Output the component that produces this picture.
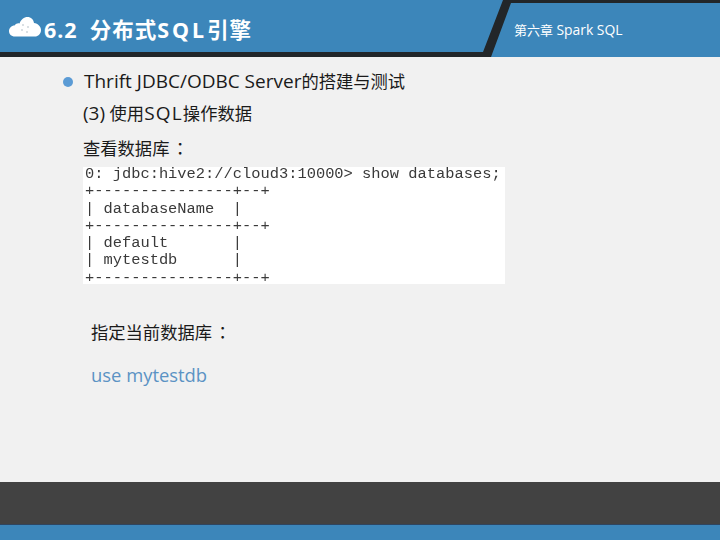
<script>
  const codeLines = [
    '0: jdbc:hive2://cloud3:10000> show databases;',
    '+---------------+--+',
    '| databaseName  |',
    '+---------------+--+',
    '| default       |',
    '| mytestdb      |',
    '+---------------+--+'
  ];
</script>

<div class="slide">
  <header class="header">
    <svg class="slash" viewBox="0 0 720 57" width="720" height="57" aria-hidden="true">
      <polygon points="0,52 483,52 503,0 720,0 720,3 511,3 491,57 0,57" fill="#222629" />
    </svg>
    <div class="title">
      <svg class="cloud" viewBox="0 0 32 20" width="32" height="20" aria-hidden="true">
        <path d="M6 19.500 C2 19.500 0 17 0 14 C0 11 2.500 8.500 5.500 8.500 C7 6.500 9 6 10.500 6.500 C12 2.500 15 0 18.500 0 C22 0 24.500 2.500 25 6 C29 6.500 32 9.500 32 13 C32 17 29 19.500 26 19.500 Z" fill="#fff" />
        <g fill="#9aa9b5">
          <circle cx="14" cy="8" r="0.7" />
          <circle cx="19" cy="10" r="0.7" />
          <circle cx="13" cy="13" r="0.7" />
          <circle cx="18" cy="15" r="0.7" />
        </g>
      </svg>
      <h1><span class="num">6.2</span>分布式<span class="sql">SQL</span>引擎</h1>
    </div>
    <div class="chapter">第六章 <span class="chapter-lat">Spark SQL</span></div>
  </header>

  <main class="content">
    <div class="bullet-row">
      <span class="dot"></span>
      <span><span class="lat">Thrift JDBC/ODBC Server</span>的搭建与测试</span>
    </div>
    <p class="step"><span class="lat">(3)</span> 使用<span class="lat spaced">SQL</span>操作数据</p>
    <p class="step show-db">查看数据库<span class="colon">：</span></p>
    <div class="shot">
      <pre class="code">{codeLines.join('\n')}</pre>
    </div>
    <p class="current">指定当前数据库<span class="colon">：</span></p>
    <p class="cmd">use mytestdb</p>
  </main>

  <div class="footer-dark"></div>
  <div class="footer-blue"></div>
</div>

<style>
  :global(body) {
    margin: 0;
  }

  .slide {
    width: 720px;
    height: 540px;
    background: #f1f1f1;
    display: flex;
    flex-direction: column;
    overflow: hidden;
    font-family: "Open Sans", "Noto Sans CJK SC", sans-serif;
    color: #1a1a1a;
  }

  .header {
    position: relative;
    height: 57px;
    flex: none;
    background: #3c86ba;
    display: flex;
    justify-content: space-between;
    align-items: flex-start;
  }

  .slash {
    position: absolute;
    left: 0;
    top: 0;
  }

  .title {
    position: relative;
    display: flex;
    align-items: center;
    gap: 3px;
    margin: 16px 0 0 9px;
  }

  .cloud {
    margin-top: -6px;
  }

  h1 {
    margin: 0;
    font-size: 21.500px;
    line-height: 28px;
    font-weight: 700;
    letter-spacing: 1px;
    color: #fff;
    font-family: "Noto Sans", "Noto Sans CJK SC", sans-serif;
    white-space: nowrap;
  }

  .num {
    margin-right: 12px;
  }

  .sql {
    letter-spacing: 3px;
  }

  .chapter {
    position: relative;
    width: 206px;
    margin-top: 21px;
    font-size: 13px;
    line-height: 18px;
    color: #fff;
  }

  .chapter-lat {
    font-size: 13.900px;
  }

  .content {
    flex: 1;
    padding: 11px 0 0 63px;
  }

  .bullet-row {
    display: flex;
    align-items: center;
    gap: 11px;
    height: 26px;
    font-size: 17.300px;
    white-space: nowrap;
  }

  .lat {
    font-size: 19px;
  }

  .spaced {
    letter-spacing: 1.200px;
  }

  .dot {
    width: 10px;
    height: 10px;
    margin-top: 1px;
    border-radius: 50%;
    background: #5b9bd5;
    flex: none;
  }

  p {
    margin: 0;
    white-space: nowrap;
  }

  .colon {
    font-family: "Noto Sans CJK TC", sans-serif;
    margin-left: 2px;
  }

  .step {
    margin: 6px 0 0 20px;
    font-size: 17.300px;
    line-height: 26px;
  }

  .show-db {
    margin-top: 8px;
  }

  .shot {
    display: flow-root;
    width: 422px;
    height: 117px;
    box-sizing: border-box;
    margin: 5px 0 0 20px;
    padding: 0 0 0 2px;
    background: #fff;
  }

  .code {
    margin: -1px 0 0;
    font-family: "Liberation Mono", monospace;
    font-size: 15.400px;
    line-height: 17.300px;
    color: #3a3a3a;
    filter: blur(0.25px);
  }

  .current {
    margin: 35px 0 0 28px;
    font-size: 17.300px;
    line-height: 26px;
  }

  .cmd {
    margin: 16px 0 0 28px;
    font-size: 18.400px;
    line-height: 26px;
    color: #5b93c4;
  }

  .footer-dark {
    height: 43px;
    flex: none;
    background: #424242;
    border-bottom: 1px solid #2f4560;
    box-sizing: border-box;
  }

  .footer-blue {
    height: 15px;
    flex: none;
    background: #3c86ba;
  }
</style>
